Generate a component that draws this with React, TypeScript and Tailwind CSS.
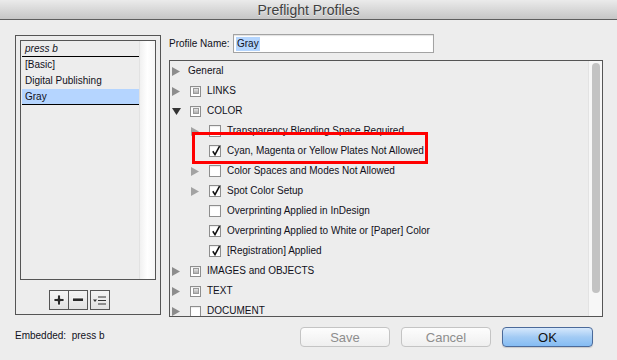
import React from 'react';

type Check = 'none' | 'on' | 'mixed';

interface TreeRow {
  label: string;
  level: 0 | 1;
  arrow?: 'right' | 'down' | null;
  check?: Check | null;
}

const rows: TreeRow[] = [
  { label: 'General', level: 0, arrow: 'right', check: null },
  { label: 'LINKS', level: 0, arrow: 'right', check: 'mixed' },
  { label: 'COLOR', level: 0, arrow: 'down', check: 'mixed' },
  { label: 'Transparency Blending Space Required', level: 1, arrow: 'right', check: 'none' },
  { label: 'Cyan, Magenta or Yellow Plates Not Allowed', level: 1, arrow: null, check: 'on' },
  { label: 'Color Spaces and Modes Not Allowed', level: 1, arrow: 'right', check: 'none' },
  { label: 'Spot Color Setup', level: 1, arrow: 'right', check: 'on' },
  { label: 'Overprinting Applied in InDesign', level: 1, arrow: null, check: 'none' },
  { label: 'Overprinting Applied to White or [Paper] Color', level: 1, arrow: null, check: 'on' },
  { label: '[Registration] Applied', level: 1, arrow: null, check: 'on' },
  { label: 'IMAGES and OBJECTS', level: 0, arrow: 'right', check: 'mixed' },
  { label: 'TEXT', level: 0, arrow: 'right', check: 'mixed' },
  { label: 'DOCUMENT', level: 0, arrow: 'right', check: 'none' },
];

const profiles = [
  { name: 'press b', italic: true, line: true },
  { name: '[Basic]' },
  { name: 'Digital Publishing' },
  { name: 'Gray', selected: true, line: true },
];

const Arrow: React.FC<{ dir: 'right' | 'down'; light?: boolean }> = ({ dir, light }) =>
  dir === 'down' ? (
    <svg width="9" height="7" viewBox="0 0 9 7">
      <polygon points="0,0 9,0 4.5,7" fill="#333" />
    </svg>
  ) : (
    <svg width="8" height="9" viewBox="0 0 8 9">
      <polygon points="0,0 8,4.5 0,9" fill={light ? '#a3a3a3' : '#8c8c8c'} />
    </svg>
  );

const CheckBox: React.FC<{ state: Check; size: number }> = ({ state, size }) => (
  <div
    className="relative flex items-center justify-center border border-[#8e8e8e] bg-white shadow-[inset_0_1px_1px_rgba(0,0,0,0.08)]"
    style={{ width: size, height: size }}
  >
    {state === 'mixed' && (
      <div className="w-[6px] h-[6px] border border-[#9a9a9a] bg-gradient-to-b from-[#e4e4e4] to-[#b0b0b0]" />
    )}
    {state === 'on' && (
      <svg width="10" height="11" viewBox="0 0 10 11" className="absolute left-[1px] top-[-1px]">
        <path d="M1.8 6.3 L4 9.6 L8.6 1.2" fill="none" stroke="#111" strokeWidth="1.6" />
      </svg>
    )}
  </div>
);

const Row: React.FC<{ row: TreeRow }> = ({ row }) => {
  const child = row.level === 1;
  return (
    <div className={`flex items-center h-[20px] shrink-0 ${child ? 'pl-[21px]' : 'pl-[2px]'}`}>
      <div className={`${row.check === null ? 'w-[16px]' : 'w-[18px]'} flex items-center shrink-0`}>
        {row.arrow && <Arrow dir={row.arrow} light={child} />}
      </div>
      {row.check && <CheckBox state={row.check} size={child ? 12 : 11} />}
      <span className={`${row.check ? 'ml-[6px]' : ''} whitespace-nowrap`}>{row.label}</span>
    </div>
  );
};

const SmallButton: React.FC<{ children: React.ReactNode; className?: string }> = ({ children, className }) => (
  <div
    className={`w-[20px] h-[20px] flex items-center justify-center border border-[#555] bg-gradient-to-b from-[#f4f4f4] to-[#e2e2e2] ${className ?? ''}`}
  >
    {children}
  </div>
);

const PushButton: React.FC<{ label: string; primary?: boolean; w: number }> = ({ label, primary, w }) => (
  <div
    className={`h-[20px] rounded-[4px] flex items-center justify-center text-[13px] leading-none border ${
      primary
        ? 'border-[#4b6a9a] bg-gradient-to-b from-[#d6e8fc] via-[#a3cbf4] to-[#84bcf3] text-[#111] shadow-[0_1px_1px_rgba(0,0,0,0.15)]'
        : 'border-[#c4c4c4] bg-gradient-to-b from-[#fdfdfd] to-[#efefef] text-[#8d8d8d]'
    }`}
    style={{ width: w }}
  >
    {label}
  </div>
);

export default function App() {
  return (
    <div
      className="w-[617px] h-[360px] bg-[#ededed] flex flex-col overflow-hidden text-[10px] text-[#10101a] leading-none"
      style={{ fontFamily: '"Lucida Grande", "Liberation Sans", Arial, sans-serif' }}
    >
      <div className="h-[20px] shrink-0 flex items-center justify-center bg-gradient-to-b from-[#ebebeb] to-[#c6c6c6] border-b border-[#5e5e5e] text-[14px] text-[#404040] [text-shadow:0_1px_0_rgba(255,255,255,0.6)]">
        Preflight Profiles
      </div>

      <div className="flex h-[297px] shrink-0">
        {/* profile list */}
        <div className="ml-[15px] mt-[15px] w-[146px] h-[280px] border border-[#555] flex flex-col items-start p-[4px]">
          <div className="w-[136px] h-[241px] border border-[#555] flex">
            <div className="w-[117px] ml-[1px] flex flex-col">
              {profiles.map((p) => (
                <div
                  key={p.name}
                  className={`h-[16px] flex items-center pl-[3px] ${p.line ? 'border-b border-black' : ''} ${
                    p.selected ? 'bg-[#b5d5ff]' : ''
                  } ${p.italic ? 'italic' : ''}`}
                >
                  {p.name}
                </div>
              ))}
            </div>
            <div className="ml-auto w-[16px] h-full bg-gradient-to-r from-[#f1f1f1] via-[#ffffff] to-[#f6f6f6] border-l border-[#e2e2e2]" />
          </div>
          <div className="flex mt-[10px] ml-[29px]">
            <SmallButton>
              <svg width="12" height="12" viewBox="0 0 12 12">
                <path d="M4.5 1 H7.5 V4.5 H11 V7.5 H7.5 V11 H4.5 V7.5 H1 V4.5 H4.5 Z" fill="#2a2a2a" stroke="#fff" strokeWidth="0.8" />
              </svg>
            </SmallButton>
            <SmallButton className="-ml-[1px]">
              <svg width="12" height="6" viewBox="0 0 12 6">
                <rect x="0.5" y="1" width="11" height="3.5" fill="#2a2a2a" stroke="#fff" strokeWidth="0.8" />
              </svg>
            </SmallButton>
            <SmallButton className="ml-[2px]">
              <svg width="14" height="9" viewBox="0 0 14 9">
                <polygon points="0,3.5 4,3.5 2,6" fill="#333" />
                <rect x="5" y="0.5" width="8" height="1" fill="#333" />
                <rect x="5" y="4" width="8" height="1" fill="#333" />
                <rect x="5" y="7.5" width="8" height="1" fill="#333" />
              </svg>
            </SmallButton>
          </div>
        </div>

        {/* right side */}
        <div className="ml-[8px] mt-[14px] flex flex-col">
          <div className="flex items-center h-[19px]">
            <span className="w-[64px]">Profile Name:</span>
            <div className="w-[201px] h-[19px] border border-[#a3a3a3] bg-white shadow-[inset_0_1px_1px_rgba(0,0,0,0.12)] flex items-center pl-[2px]">
              <span className="bg-[#b4d5fe] px-[1px] h-[14px] flex items-center">Gray</span>
            </div>
          </div>

          <div className="mt-[7px] w-[434px] h-[257px] border border-[#555] flex overflow-hidden relative">
            <div className="flex-1 flex flex-col">
              {rows.map((r) => (
                <Row key={r.label} row={r} />
              ))}
            </div>
            <div className="w-[14px] h-full bg-[#f7f7f7] border-l border-[#e3e3e3] flex justify-center">
              <div className="mt-[2px] w-[8px] h-[230px] rounded-full bg-[#c3c3c3]" />
            </div>
            <div className="absolute left-[22px] top-[71px] w-[236px] h-[32px] border-[3px] border-[#ff0000]" />
          </div>
        </div>
      </div>

      <div className="flex items-start">
        <span className="ml-[15px] mt-[14px] whitespace-pre">Embedded:  press b</span>
        <div className="ml-auto mr-[24px] mt-[10px] flex gap-[11px]">
          <PushButton label="Save" w={90} />
          <PushButton label="Cancel" w={90} />
          <PushButton label="OK" w={91} primary />
        </div>
      </div>
    </div>
  );
}
